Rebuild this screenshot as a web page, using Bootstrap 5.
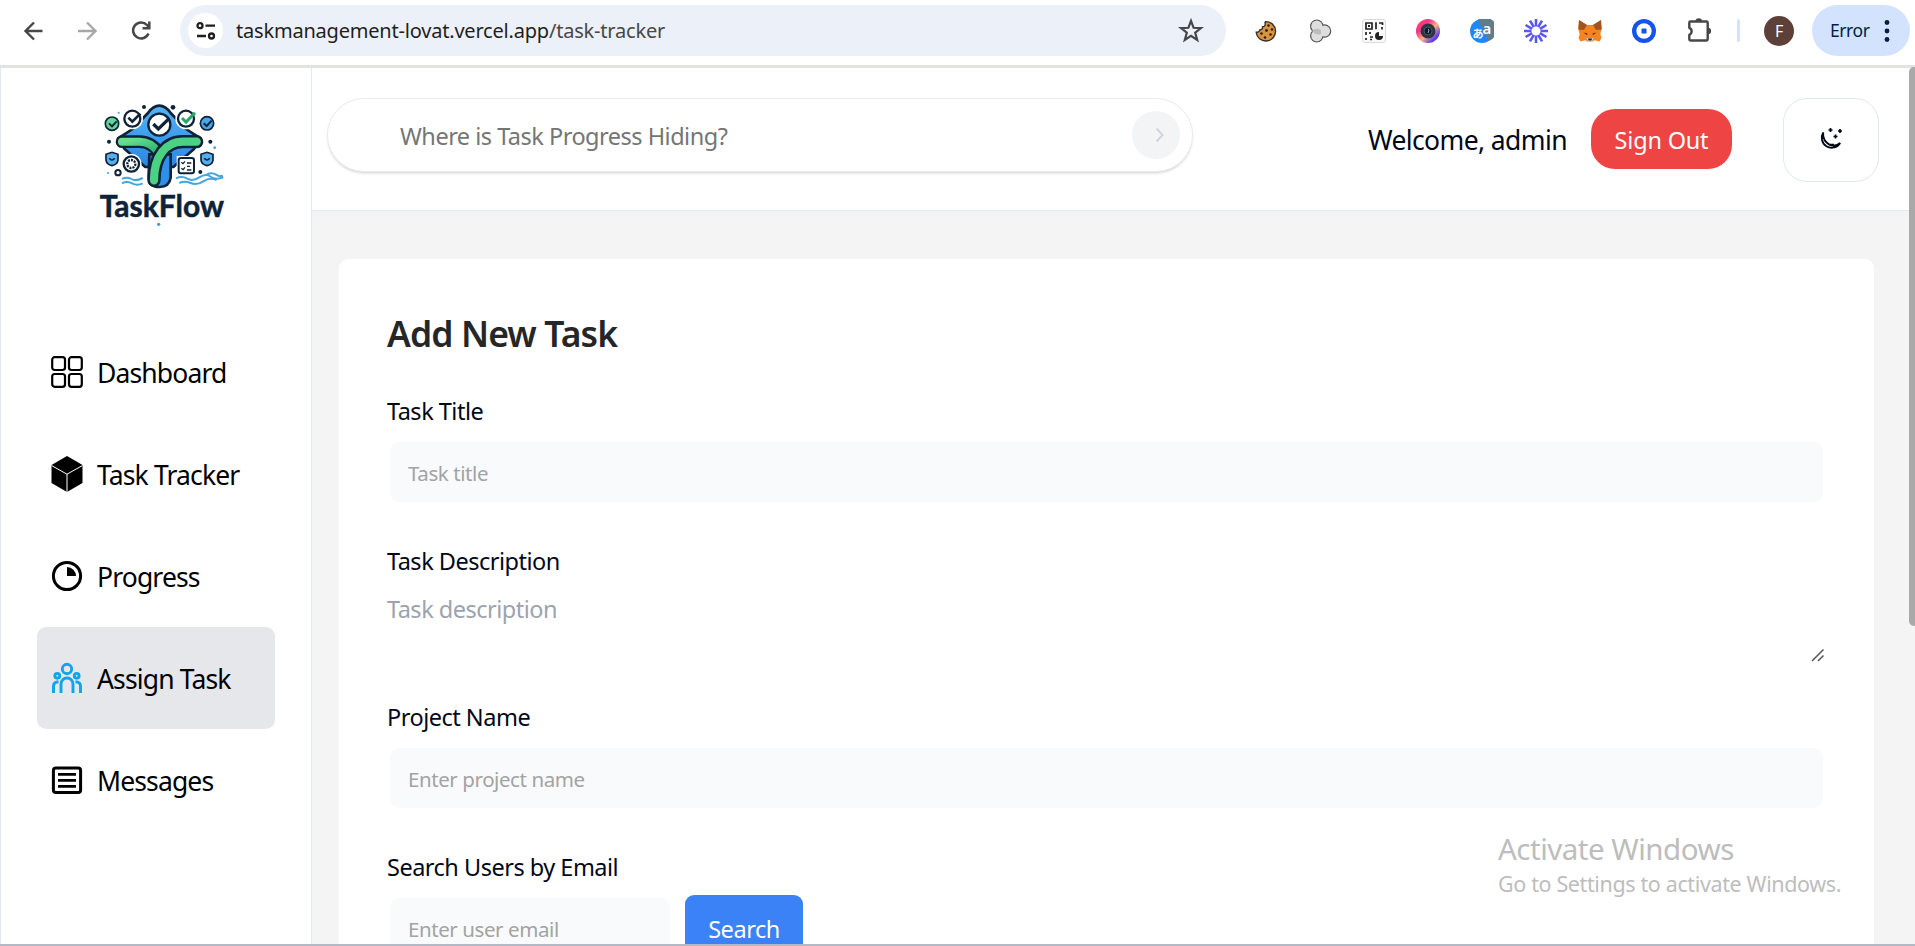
<!DOCTYPE html>
<html lang="en">
<head>
<meta charset="utf-8">
<title>TaskFlow</title>
<link href="https://cdn.jsdelivr.net/npm/bootstrap@5.3.0/dist/css/bootstrap.min.css" rel="stylesheet">
<style>
  body { font-family: "Noto Sans", "Open Sans", sans-serif; color: #020817; height: 946px; overflow: hidden; background: #fff; }
  svg { display: block; flex: none; }
  .browser-bar { height: 68px; border-bottom: 3px solid #e1e3e1; padding: 5px 5px 9px 15px; }
  .browser-bar .nav-ico { width: 36px; margin-right: 18px; }
  .omnibox { width: 1047px; height: 51px; margin-left: 3px; border-radius: 26px; background: #ecf0f9; padding: 0 19px 0 8px; }
  .site-info { width: 35px; height: 35px; border-radius: 50%; background: #fff; margin-right: 13px; }
  .url { font-size: 20px; letter-spacing: -.2px; color: #1f1f1f; line-height: 30px; }
  .url span { color: #474747; }
  .ext { gap: 30px; margin-left: 28px; }
  .bar-sep { width: 3px; height: 23px; background: #d3e3fd; border-radius: 2px; margin: 0 24px 0 25px; }
  .avatar { width: 30px; height: 30px; border-radius: 50%; background: #5d4037; color: #fff; font-size: 16px; margin-right: 18px; }
  .err-pill { width: 98px; height: 51px; border-radius: 26px; background: #d3e3fd; color: #041e49; font-size: 17.5px; letter-spacing: -.45px; padding: 0 20px 0 18px; }

  .app { height: 876px; }
  .side { width: 312px; border-left: 1px solid #e2e8f0; border-right: 1px solid #e2e8f0; padding: 23px 36px 0; }
  .brand { margin: 0 0 80px 53px; width: 150px; height: 150px; }
  .side-link { height: 102px; width: 238px; border-radius: 9px; padding-left: 14px; font-size: 26.5px; letter-spacing: -.86px; color: #000; text-decoration: none; }
  .side-link.active { background: #e5e7eb; }
  .side-link svg { margin-right: 14px; }
  .side-link span { padding-top: 3px; }
  .content-area { background: #f4f4f4; min-width: 0; }
  .topbar { height: 143px; background: #fff; border-bottom: 1px solid #e2e8f0; padding: 0 36px 0 15px; }
  .find { width: 864px; height: 72px; border-radius: 36px; margin: 0 1px 9px; padding: 0 12px 0 70px; background: #fff;
          box-shadow: 0 0 0 1px #ececec, 0 2px 3px rgba(0,0,0,.2); }
  .find input { border: 0; outline: 0; font-size: 23.5px; letter-spacing: -.5px; background: none; padding: 4px 2px 0; }
  .find input::placeholder { color: #757575; }
  .go { width: 48px; height: 48px; border-radius: 50%; background: #f3f4f6; }
  .welcome { font-size: 26.5px; letter-spacing: -.6px; margin-right: 24px; padding-top: 3px; }
  .signout { width: 141px; height: 60px; border-radius: 24px; background: #ef4444; color: #fff; border: 0; font-size: 23.5px; letter-spacing: -.2px; margin-right: 51px; padding: 3px 0 0; }
  .theme { width: 96px; height: 84px; border-radius: 24px; border: 1px solid #e2e8f0; background: #fff; margin-top: 1px; }
  .panel { margin: 48px 41px 0 27px; background: #fff; border-radius: 9px 9px 0 0; padding: 50px 48px 0; flex: 1; min-height: 0; overflow: hidden; }
  .panel h2 { font-size: 35.5px; font-weight: 600; line-height: 48px; letter-spacing: -.9px; color: #262626; margin: 0 0 36px; }
  .field { margin-bottom: 37px; }
  .field label { display: block; line-height: 36px; font-size: 23.5px; letter-spacing: -.5px; margin-bottom: 10px; }
  .box { padding: 3px; }
  .box input { display: block; width: 100%; height: 60px; border: 0; border-radius: 9px; background: #f9fafc; padding: 2px 18px 0; font-size: 20.5px; letter-spacing: -.42px; }
  .box input::placeholder { color: #a3a3a3; }
  .field-area { position: relative; margin-bottom: 36px; }
  .field-area label { margin-bottom: 12px; }
  .field + .field { margin-top: 38px; }
  textarea { display: block; width: 100%; height: 72px; border: 0; padding: 0; line-height: 36px; font-size: 23.5px; letter-spacing: -.5px; resize: none; overflow: hidden; }
  textarea::placeholder { color: #9ca3af; }
  .grip { position: absolute; right: 1px; bottom: 1px; }
  .email { width: 286px; }
  .search-btn { width: 118px; height: 66px; border: 0; border-radius: 9px; background: #3b82f6; color: #fff; font-size: 23.5px; letter-spacing: -.45px; margin-left: 12px; padding: 1px 0 0; line-height: 30px; }
  .scroll-thumb { position: absolute; right: 0; top: 67px; width: 6px; height: 559px; background: #a9a9a9; border-radius: 5px 0 0 5px; }
  .watermark { position: absolute; left: 1498px; top: 829px; color: #bdbdbd; }
  .watermark .big-line { font-size: 29.5px; line-height: 40px; letter-spacing: -.5px; }
  .watermark .small-line { font-size: 21.5px; line-height: 30px; letter-spacing: -.37px; }
  .edge { height: 2px; background: #b3bac6; }
</style>
</head>
<body class="d-flex flex-column position-relative">

<header class="browser-bar d-flex align-items-center">
  <svg class="nav-ico" width="36" height="36" viewBox="0 0 36 36" fill="none" stroke="#474747" stroke-width="2.4"><path d="M27.500 18H11M19 9.500L10.500 18l8.500 8.500"/></svg>
  <svg class="nav-ico" width="36" height="36" viewBox="0 0 36 36" fill="none" stroke="#a8a8a8" stroke-width="2.400"><path d="M9 18h17M18 9.500l8.500 8.500-8.500 8.500"/></svg>
  <svg class="nav-ico" width="36" height="36" viewBox="0 0 36 36" fill="none" stroke="#474747" stroke-width="2.500"><path d="M25.500 20.500a8 8 0 1 1-1.500-8.500l2 2.500M26.300 8.500v6.700h-6.800"/></svg>
  <div class="omnibox d-flex align-items-center">
    <div class="site-info d-flex align-items-center justify-content-center">
      <svg width="20" height="20" viewBox="0 0 20 20" fill="none" stroke="#1f1f1f" stroke-width="2.300"><circle cx="4" cy="4.700" r="2.500"/><path d="M9.500 4.700H19M1 15h9"/><circle cx="15.500" cy="15" r="2.500"/></svg>
    </div>
    <div class="url flex-grow-1">taskmanagement-lovat.vercel.app<span>/task-tracker</span></div>
    <svg width="32" height="32" viewBox="0 0 32 32" fill="none" stroke="#474747" stroke-width="2.200"><path d="M16 5.800l2.600 7 7.400.3-5.800 4.600 2 7.200-6.200-4.100-6.200 4.100 2-7.200L6 13.100l7.400-.3z"/></svg>
  </div>
  <div class="ext d-flex align-items-center">
    <svg width="24" height="24" viewBox="0 0 24 24"><path d="M11.500 2.600a9.700 9.700 0 1 1-9.300 10.600c2 .2 3.300-.5 3.600-2.200 1.900-.2 3-1.200 2.700-3.200C10.500 7.600 11.800 6 11 3.500z" fill="#d9943f" stroke="#3c3026" stroke-width="1.400"/><g fill="#2d2117"><circle cx="14.500" cy="6.500" r="1.300"/><circle cx="18" cy="10.500" r="1.300"/><circle cx="12.500" cy="11.500" r="1.400"/><circle cx="7.500" cy="14.500" r="1.300"/><circle cx="16.500" cy="15.500" r="1.300"/><circle cx="11" cy="18.500" r="1.300"/></g></svg>
    <svg width="24" height="24" viewBox="0 0 24 24"><g fill="#ddd" stroke="#555" stroke-width="2.400"><circle cx="8.800" cy="7.200" r="5.600"/><circle cx="8.800" cy="16.800" r="5.600"/><circle cx="16.500" cy="12" r="5.600"/></g><g fill="#dedede"><circle cx="8.800" cy="7.200" r="5.600"/><circle cx="8.800" cy="16.800" r="5.600"/><circle cx="16.500" cy="12" r="5.600"/></g><path d="M4 12q4-4 9-1v4q-5 2-9-3z" fill="#bdbdbd"/></svg>
    <svg width="24" height="24" viewBox="0 0 24 24"><rect x=".500" y=".500" width="23" height="23" rx="2.500" fill="#fafafa" stroke="#dcdcdc"/><g fill="none" stroke="#222" stroke-width="1.700"><path d="M4 4h6v6H4zM14 3.200v7M17 4h3.500v2M20 8v2.500M4 13v3M8 13v2M4 19v2M8 18h3M8 20.500h2"/></g><path d="M6 6h2v2H6z" fill="#222"/><path d="M17 13a4 4 0 1 0 4 4h-4z" fill="#222"/></svg>
    <svg width="24" height="24" viewBox="0 0 24 24"><defs><linearGradient id="lens" x1="0" y1="0" x2="1" y2="1"><stop offset="0" stop-color="#ff5a3c"/><stop offset=".3" stop-color="#ff2f8e"/><stop offset=".55" stop-color="#ffb27a"/><stop offset=".8" stop-color="#5b3df0"/><stop offset="1" stop-color="#a03be8"/></linearGradient></defs><circle cx="12" cy="12" r="12" fill="url(#lens)"/><circle cx="12" cy="12" r="7.500" fill="#2f353d"/><circle cx="12" cy="12" r="4" fill="#101a26" stroke="#4a5868"/><path d="M12 10l1 1-1 3" stroke="#7db3d8" fill="none"/></svg>
    <svg width="24" height="24" viewBox="0 0 24 24"><circle cx="12" cy="12" r="12" fill="#1e88f7"/><path d="M8 .700A12 12 0 1 1 18.500 22z" fill="#607d8b"/><text x="2.500" y="18.500" font-size="11" font-weight="700" fill="#fff" font-family="Noto Sans CJK JP, sans-serif">あ</text><text x="12.500" y="14.500" font-size="15" font-weight="600" fill="#fff">a</text></svg>
    <svg width="24" height="24" viewBox="0 0 24 24" stroke="#5b57f5" stroke-width="2.600"><path d="M12 0v7.500M12 16.500V24M0 12h7.500M16.500 12H24M6 1.600l3.800 6.500M14.200 15.900l3.800 6.500M1.600 6l6.500 3.800M15.900 14.200l6.500 3.800M1.600 18l6.500-3.800M15.900 9.800L22.400 6M6 22.400l3.800-6.500M14.200 8.100L18 1.600"/></svg>
    <svg width="24" height="24" viewBox="0 0 24 24"><path d="M1 1l8 5h6l8-5 .8 9-1.500 5 1.200 4-2 3.500-5-1.300L14 23h-4l-2.500-1.800-5 1.300-2-3.500 1.200-4L.200 10z" fill="#f28422"/><path d="M1 1l8 5-3 5-5.500-.5zM23 1l-8 5 3 5 5.500-.5z" fill="#a0541f"/><path d="M5.500 13.500l4 1-.5 1.500zM18.500 13.500l-4 1 .5 1.500z" fill="#3a2c26"/><path d="M8.500 19h7l-1.500 4h-4z" fill="#d9c8ba"/><path d="M10 19.500h4l-.6 2h-2.800z" fill="#222"/></svg>
    <svg width="24" height="24" viewBox="0 0 24 24"><circle cx="12" cy="12" r="12" fill="#1652f0"/><circle cx="12" cy="12" r="7.700" fill="#fff"/><rect x="9.500" y="9.500" width="5" height="5" rx=".600" fill="#1652f0"/></svg>
    <svg width="26" height="26" viewBox="0 0 26 26"><path d="M4.500 3.500h16q1.200 0 1.200 1.200v16.600q0 1.200-1.200 1.200h-16q-1.200 0-1.200-1.200v-4.500a3.800 3.800 0 0 0 0-7V4.700q0-1.200 1.200-1.200z" fill="none" stroke="#474747" stroke-width="2.400" stroke-linejoin="round"/><path d="M9.500 3.500a3.300 3.300 0 0 1 6.600 0zM21.800 9.700a3.300 3.300 0 0 1 0 6.600z" fill="#474747"/></svg>
  </div>
  <div class="bar-sep"></div>
  <div class="avatar d-flex align-items-center justify-content-center">F</div>
  <div class="err-pill d-flex align-items-center justify-content-between">
    <span>Error</span>
    <svg width="6" height="24" viewBox="0 0 6 24" fill="#041e49"><circle cx="3" cy="3.500" r="2.400"/><circle cx="3" cy="12" r="2.400"/><circle cx="3" cy="20.500" r="2.400"/></svg>
  </div>
</header>

<div class="app d-flex">
  <aside class="side flex-shrink-0">
    <svg class="brand" viewBox="0 0 450 450">
      <defs>
        <linearGradient id="leaf" x1="0" y1="0" x2="1" y2="1"><stop offset="0" stop-color="#62e38a"/><stop offset="1" stop-color="#2fae74"/></linearGradient>
        <linearGradient id="sea" x1="0" y1="0" x2="0" y2="1"><stop offset="0" stop-color="#55b4f5"/><stop offset="1" stop-color="#2b86e4"/></linearGradient>
      </defs>
      <path d="M208 44c14 0 24 8 34 22l46 48 44 28-20 32-62 54h-84l-62-54-20-32 44-28 46-48c10-14 20-22 34-22z" fill="url(#sea)" stroke="#0e2338" stroke-width="8" stroke-linejoin="round"/>
      <path d="M178 190h64v70q-4 28-34 28t-32-28z" fill="#2f90ea" stroke="#0e2338" stroke-width="8"/>
      <path d="M96 152h52c28 0 44 14 60 32" fill="none" stroke="#0e2338" stroke-width="38" stroke-linecap="round"/>
      <path d="M96 152h52c28 0 44 14 56 30" fill="none" stroke="url(#leaf)" stroke-width="24" stroke-linecap="round"/>
      <path d="M320 152h-42c-50 0-86 44-86 116" fill="none" stroke="#0e2338" stroke-width="40" stroke-linecap="round"/>
      <path d="M320 152h-42c-50 0-86 44-86 116" fill="none" stroke="#4bd183" stroke-width="25" stroke-linecap="round"/>
      <g fill="#fff" stroke="#fff" stroke-width="16"><circle cx="127" cy="83" r="24"/><circle cx="288" cy="83" r="24"/><circle cx="124" cy="219" r="23"/><rect x="268" y="203" width="42" height="42"/></g>
      <g fill="#fff" stroke="#0e2338" stroke-width="7"><circle cx="208" cy="101" r="33"/><circle cx="127" cy="83" r="24"/><circle cx="288" cy="83" r="24"/><circle cx="124" cy="219" r="23"/></g>
      <g stroke="#0e2338" stroke-width="5"><circle cx="66" cy="98" r="20" fill="#5fd695"/><circle cx="351" cy="97" r="20" fill="#4aa7ea"/><path d="M48 190l18-6 18 6v18q-2 12-18 16-16-4-18-16zM333 190l18-6 18 6v18q-2 12-18 16-16-4-18-16z" fill="#55aef0"/></g>
      <g fill="none" stroke="#0e2338" stroke-width="10"><path d="M190 99l15 15 32-31"/><path d="M115 80l12 12 24-24" stroke-width="8"/><path d="M276 81l12 12 27-28" stroke="#27a86b" stroke-width="9"/><path d="M57 97l9 9 14-15M341 97l9 8 15-16" stroke-width="6"/><path d="M58 202q8 10 16 0M343 202q8 10 16 0" stroke-width="5"/></g>
      <circle cx="124" cy="219" r="12" fill="none" stroke="#0e2338" stroke-width="7" stroke-dasharray="6 3"/>
      <rect x="266" y="201" width="46" height="46" rx="7" fill="#fff" stroke="#0e2338" stroke-width="6"/><path d="M280 200h18M274 214l5 4 6-7M274 232l5 4 6-7M291 216h13M291 226h9M291 237h13" stroke="#0e2338" stroke-width="4" fill="none"/>
      <g fill="#0e2338"><circle cx="162" cy="48" r="6"/><circle cx="249" cy="49" r="7"/><circle cx="57" cy="152" r="6"/><circle cx="361" cy="152" r="6"/><circle cx="331" cy="243" r="6"/></g>
      <circle cx="84" cy="245" r="8" fill="none" stroke="#0e2338" stroke-width="6"/>
      <g fill="#3f9fe0"><circle cx="86" cy="65" r="3"/><circle cx="374" cy="170" r="4"/><circle cx="54" cy="246" r="3"/><circle cx="206" cy="400" r="5"/></g>
      <path d="M96 264q14-8 28 0t34-3M96 277q14-8 30 0t32 0M258 262q18-8 34 1t36-4 34-2 38 2M268 276q16-8 34 0t38-5 40-4M350 251q16-8 28 0t20 2" fill="none" stroke="#43a6dd" stroke-width="6"/>
      <text x="29" y="379" font-family="Lato, sans-serif" font-weight="700" font-size="89" textLength="373" lengthAdjust="spacingAndGlyphs" fill="#0e2338" stroke="#0e2338" stroke-width="1.500">TaskFlow</text>
    </svg>
    <nav class="d-flex flex-column">
      <a class="side-link d-flex align-items-center" href="#">
        <svg width="32" height="32" viewBox="0 0 32 32" fill="none" stroke="#000" stroke-width="2.200"><rect x="1.200" y="1.200" width="12.800" height="12.800" rx="2.500"/><rect x="18" y="1.200" width="12.800" height="12.800" rx="2.500"/><rect x="1.200" y="18" width="12.800" height="12.800" rx="2.500"/><rect x="18" y="18" width="12.800" height="12.800" rx="2.500"/></svg><span>Dashboard</span></a>
      <a class="side-link d-flex align-items-center" href="#">
        <svg width="32" height="36" viewBox="0 0 32 36"><path d="M16 0l15.500 9v18L16 36 .500 27V9z"/><path d="M.500 9.500L16 18.200l15.500-8.700M16 18v18" stroke="#fff" stroke-width="1" fill="none"/></svg><span>Task Tracker</span></a>
      <a class="side-link d-flex align-items-center" href="#">
        <svg width="32" height="32" viewBox="0 0 32 32"><circle cx="16" cy="16" r="13.600" fill="none" stroke="#000" stroke-width="3"/><path d="M16 7v9h9a9 9 0 0 0-9-9z"/></svg><span>Progress</span></a>
      <a class="side-link active d-flex align-items-center" href="#">
        <svg width="32" height="32" viewBox="0 0 32 32" fill="none" stroke="#0ea5e9" stroke-width="2.900"><circle cx="16" cy="7" r="4.700"/><circle cx="6.300" cy="13.800" r="2.400"/><circle cx="25.700" cy="13.800" r="2.400"/><path d="M10 31V22a6 6 0 0 1 12 0v9M2.500 31v-7q0-4 5-4.300M29.500 31v-7q0-4-5-4.300"/></svg><span>Assign Task</span></a>
      <a class="side-link d-flex align-items-center" href="#">
        <svg width="32" height="32" viewBox="0 0 32 32" fill="none" stroke="#000"><rect x="2.400" y="4" width="27.200" height="24.400" rx="2.500" stroke-width="3"/><path d="M7 10.300h18M7 16.300h18M7 22.300h18" stroke-width="2.700"/></svg><span>Messages</span></a>
    </nav>
  </aside>

  <main class="content-area flex-grow-1 d-flex flex-column">
    <div class="topbar d-flex align-items-center flex-shrink-0">
      <div class="find d-flex align-items-center me-auto">
        <input class="flex-grow-1" type="text" placeholder="Where is Task Progress Hiding?">
        <div class="go d-flex align-items-center justify-content-center">
          <svg width="24" height="24" viewBox="0 0 24 24" fill="none" stroke="#d1d5db" stroke-width="2"><path d="M12.500 5.500l6 6.500-6 6.500"/></svg>
        </div>
      </div>
      <span class="welcome">Welcome, admin</span>
      <button class="signout" type="button">Sign Out</button>
      <button class="theme d-flex align-items-center justify-content-center" type="button">
        <svg width="24" height="25" viewBox="0 0 24 25" fill="none" stroke="#020817" stroke-width="1.800"><path d="M4.200 5.500a9.800 9.800 0 1 0 17 10.500A10 10 0 0 1 11 18 12 12 0 0 1 4.200 5.500z"/><path d="M5 13l5 4.500h5" stroke-width="1.600"/><path d="M11.500 1v4M9.500 3h4M21 2v4M19 4h4M16.500 7.500v4M14.500 9.500h4" stroke-width="1.700"/></svg>
      </button>
    </div>

    <section class="panel">
      <h2>Add New Task</h2>
      <div class="field">
        <label for="title">Task Title</label>
        <div class="box"><input id="title" type="text" placeholder="Task title"></div>
      </div>
      <div class="field field-area">
        <label for="desc">Task Description</label>
        <textarea id="desc" placeholder="Task description"></textarea>
        <svg class="grip" width="14" height="14" viewBox="0 0 14 14" stroke="#555" stroke-width="1.500"><path d="M1 13L12.500 1.500M7 13l5.500-5.500"/></svg>
      </div>
      <div class="field mt-0">
        <label for="project">Project Name</label>
        <div class="box"><input id="project" type="text" placeholder="Enter project name"></div>
      </div>
      <div class="field">
        <label for="email">Search Users by Email</label>
        <div class="d-flex">
          <div class="box email"><input id="email" type="text" placeholder="Enter user email"></div>
          <button class="search-btn" type="button">Search</button>
        </div>
      </div>
    </section>
  </main>
</div>
<div class="edge"></div>

<div class="scroll-thumb"></div>
<div class="watermark">
  <div class="big-line">Activate Windows</div>
  <div class="small-line">Go to Settings to activate Windows.</div>
</div>
<script src="https://cdn.jsdelivr.net/npm/bootstrap@5.3.0/dist/js/bootstrap.bundle.min.js"></script>
</body>
</html>
